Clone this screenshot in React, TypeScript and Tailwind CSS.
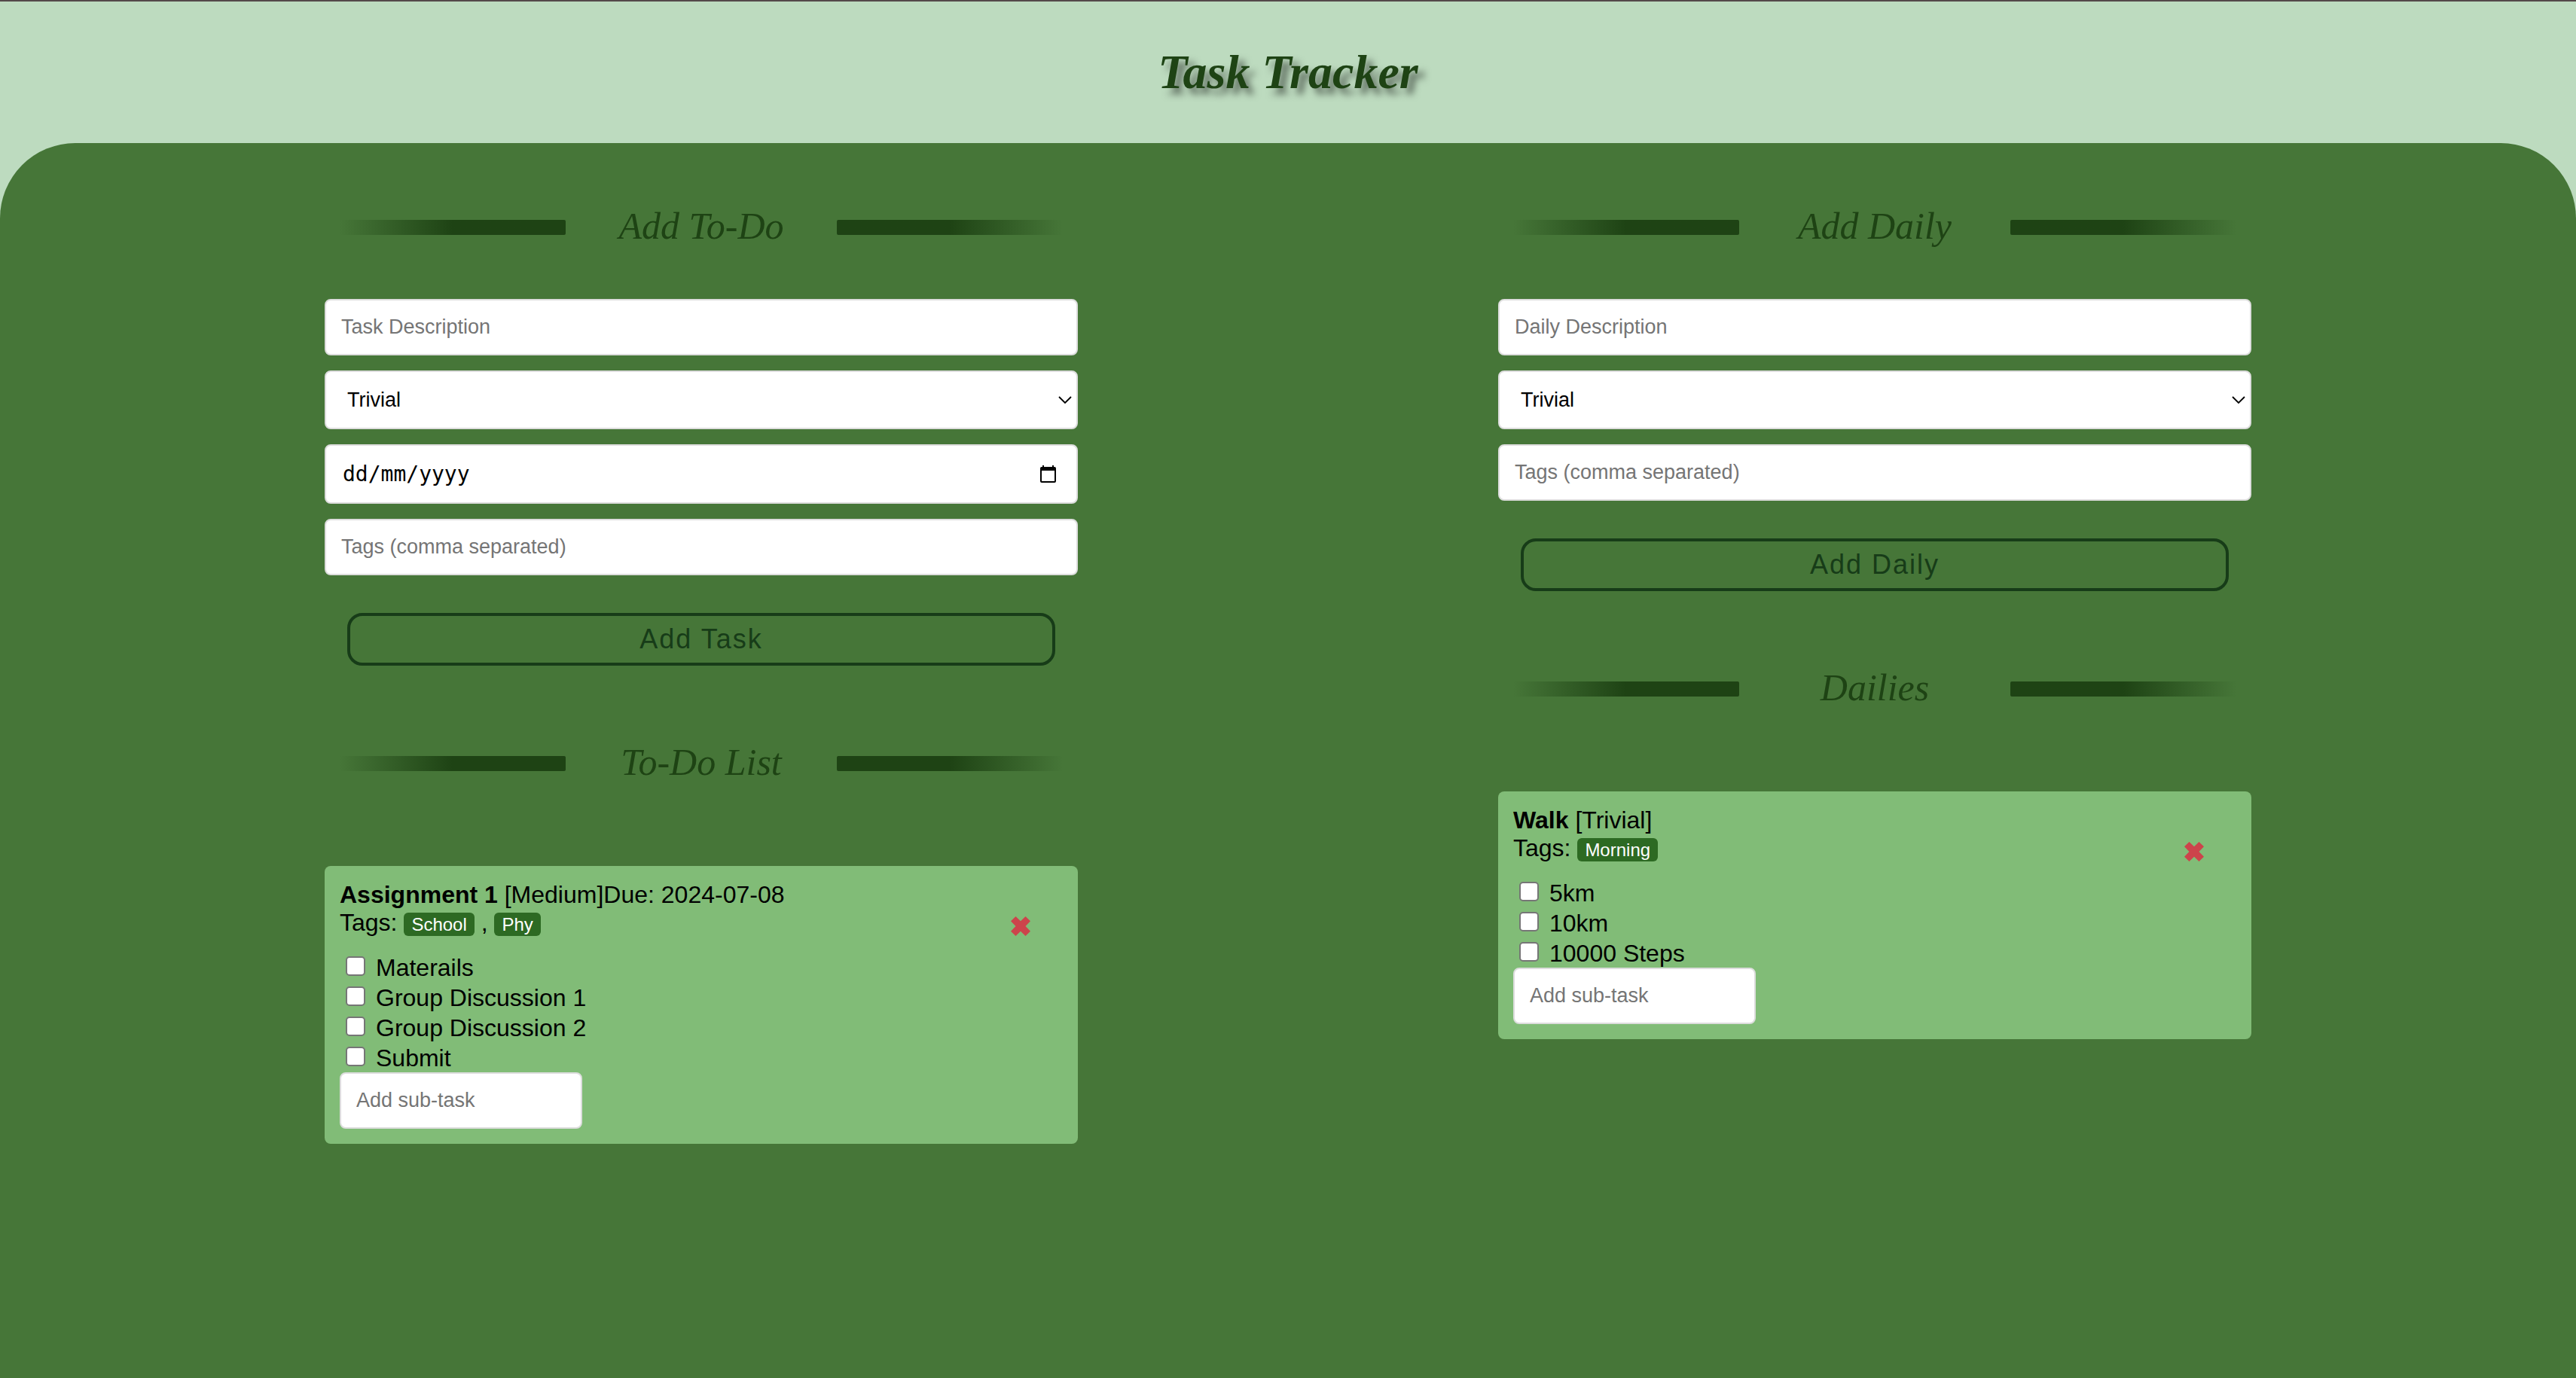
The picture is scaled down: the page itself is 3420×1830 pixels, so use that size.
import React, { useId } from "react";

const field =
  "block w-full rounded-lg border-2 border-[#dddddd] bg-white px-5 text-[27px] text-black placeholder:text-[#757575] placeholder:opacity-100 outline-none";

function SectionHeading({ children }: { children: React.ReactNode }) {
  return (
    <div className="flex h-15 items-center px-5">
      <span className="h-5 w-[300px] rounded-r-[2px] bg-linear-to-r from-transparent to-[#1e4314] to-50%" />
      <h2 className="flex-1 pb-1 text-center font-['Liberation_Serif',serif] text-[50px] leading-14 text-[#1e4314] italic">
        {children}
      </h2>
      <span className="h-5 w-[300px] rounded-l-[2px] bg-linear-to-l from-transparent to-[#1e4314] to-50%" />
    </div>
  );
}

function DifficultySelect() {
  return (
    <div className="relative">
      <select
        aria-label="Difficulty"
        defaultValue="Trivial"
        className={`${field} h-[78px] appearance-none pl-7`}
      >
        <option>Trivial</option>
        <option>Easy</option>
        <option>Medium</option>
        <option>Hard</option>
      </select>
      <svg
        className="pointer-events-none absolute top-[33px] right-[7px] h-3 w-5"
        viewBox="0 0 20 12"
        fill="none"
        stroke="#000"
        strokeWidth="1.800"
      >
        <path d="M2 2l8 8 8-8" />
      </svg>
    </div>
  );
}

function DateField() {
  return (
    <div className="relative">
      <input
        type="text"
        aria-label="Due date"
        placeholder="dd/mm/yyyy"
        className="block h-[79px] w-full rounded-lg border-2 border-[#dddddd] bg-white px-[22px] font-['DejaVu_Sans_Mono',monospace] text-[28px] text-black outline-none placeholder:text-black placeholder:opacity-100"
      />
      <button type="button" aria-label="Open calendar" className="absolute top-7 right-7 h-6 w-6">
        <svg viewBox="0 0 24 24" className="h-6 w-6">
          <path
            fill="#000"
            fillRule="evenodd"
            d="M5 0h2v2h11V0h2v2h1a2 2 0 0 1 2 2v17a2 2 0 0 1-2 2H4a2 2 0 0 1-2-2V4a2 2 0 0 1 2-2h1zM4 7v14h17V7z"
          />
        </svg>
      </button>
    </div>
  );
}

function SubmitButton({ children }: { children: React.ReactNode }) {
  return (
    <button
      type="button"
      className="mx-[30px] mt-[30px] h-[70px] rounded-[20px] border-4 border-[#173c18] text-[36px] tracking-[2px] text-[#173c18]"
    >
      {children}
    </button>
  );
}

function SubTask({ label }: { label: string }) {
  const id = useId();
  return (
    <li className="flex h-10 items-end">
      <input
        id={id}
        type="checkbox"
        className="mt-1.5 ml-2 h-[26px] w-[26px] appearance-none self-start rounded-[5px] border-2 border-[#767676] bg-white"
      />
      <label htmlFor={id} className="ml-3.5 leading-[38px]">
        {label}
      </label>
    </li>
  );
}

type Task = {
  title: string;
  level: string;
  due?: string;
  tags: string[];
  subTasks: string[];
};

function TaskCard({ task }: { task: Task }) {
  return (
    <article className="mt-[106px] flex items-start justify-between rounded-lg bg-[#81bc77] p-5 text-[32px] leading-[37px] text-black">
      <div>
        <p>
          <strong>{task.title}</strong> [{task.level}]{task.due && `Due: ${task.due}`}
        </p>
        <p className="h-[37px]">
          Tags:{" "}
          {task.tags.map((tag, i) => (
            <React.Fragment key={tag}>
              {i > 0 && " , "}
              <span className="inline-block rounded-md bg-[#2d6a23] px-2.5 py-0.5 text-[24px] leading-[27px] text-white">
                {tag}
              </span>
            </React.Fragment>
          ))}
        </p>
        <ul className="mt-5">
          {task.subTasks.map((s) => (
            <SubTask key={s} label={s} />
          ))}
        </ul>
        <input
          type="text"
          aria-label="Add sub-task"
          placeholder="Add sub-task"
          className={`${field} h-[75px] max-w-[322px]`}
        />
      </div>
      <button type="button" aria-label="Delete task" className="mt-[47px] mr-[43px]">
        <svg className="h-[26px] w-[26px]" viewBox="0 0 76 76">
          <path
            fill="#cc444b"
            d="M0 18L19 0l19 18L57 0l19 18-19 20 19 20-19 18-19-18-19 18L0 58l19-20z"
          />
        </svg>
      </button>
    </article>
  );
}

function Column({
  formTitle,
  listTitle,
  buttonLabel,
  placeholder,
  hasDate,
  task,
}: {
  formTitle: string;
  listTitle: string;
  buttonLabel: string;
  placeholder: string;
  hasDate?: boolean;
  task: Task;
}) {
  return (
    <section className="mx-auto w-full max-w-[1000px]">
      <SectionHeading>{formTitle}</SectionHeading>
      <form className="mt-[65px] mb-25 flex flex-col gap-5">
        <input type="text" aria-label={placeholder} placeholder={placeholder} className={`${field} h-[75px]`} />
        <DifficultySelect />
        {hasDate && <DateField />}
        <input
          type="text"
          aria-label="Tags"
          placeholder="Tags (comma separated)"
          className={`${field} h-[75px]`}
        />
        <SubmitButton>{buttonLabel}</SubmitButton>
      </form>
      <SectionHeading>{listTitle}</SectionHeading>
      <TaskCard task={task} />
    </section>
  );
}

export default function App() {
  return (
    <div className="flex min-h-screen flex-col border-t-2 border-[#54484a] bg-[#bddbbf] font-['Liberation_Sans',Arial,sans-serif]">
      <header className="flex h-[188px] items-center justify-center">
        <h1 className="font-['Liberation_Serif',serif] text-[64px] leading-none font-bold text-[#1e4314] italic [text-shadow:8px_8px_10px_rgba(0,0,0,0.5)]">
          Task Tracker
        </h1>
      </header>
      <main className="grid flex-1 grid-cols-2 items-start rounded-t-[100px] bg-[#467638] px-38 pt-[82px] pb-20">
        <Column
          formTitle="Add To-Do"
          listTitle="To-Do List"
          buttonLabel="Add Task"
          placeholder="Task Description"
          hasDate
          task={{
            title: "Assignment 1",
            level: "Medium",
            due: "2024-07-08",
            tags: ["School", "Phy"],
            subTasks: ["Materails", "Group Discussion 1", "Group Discussion 2", "Submit"],
          }}
        />
        <Column
          formTitle="Add Daily"
          listTitle="Dailies"
          buttonLabel="Add Daily"
          placeholder="Daily Description"
          task={{
            title: "Walk",
            level: "Trivial",
            tags: ["Morning"],
            subTasks: ["5km", "10km", "10000 Steps"],
          }}
        />
      </main>
    </div>
  );
}
